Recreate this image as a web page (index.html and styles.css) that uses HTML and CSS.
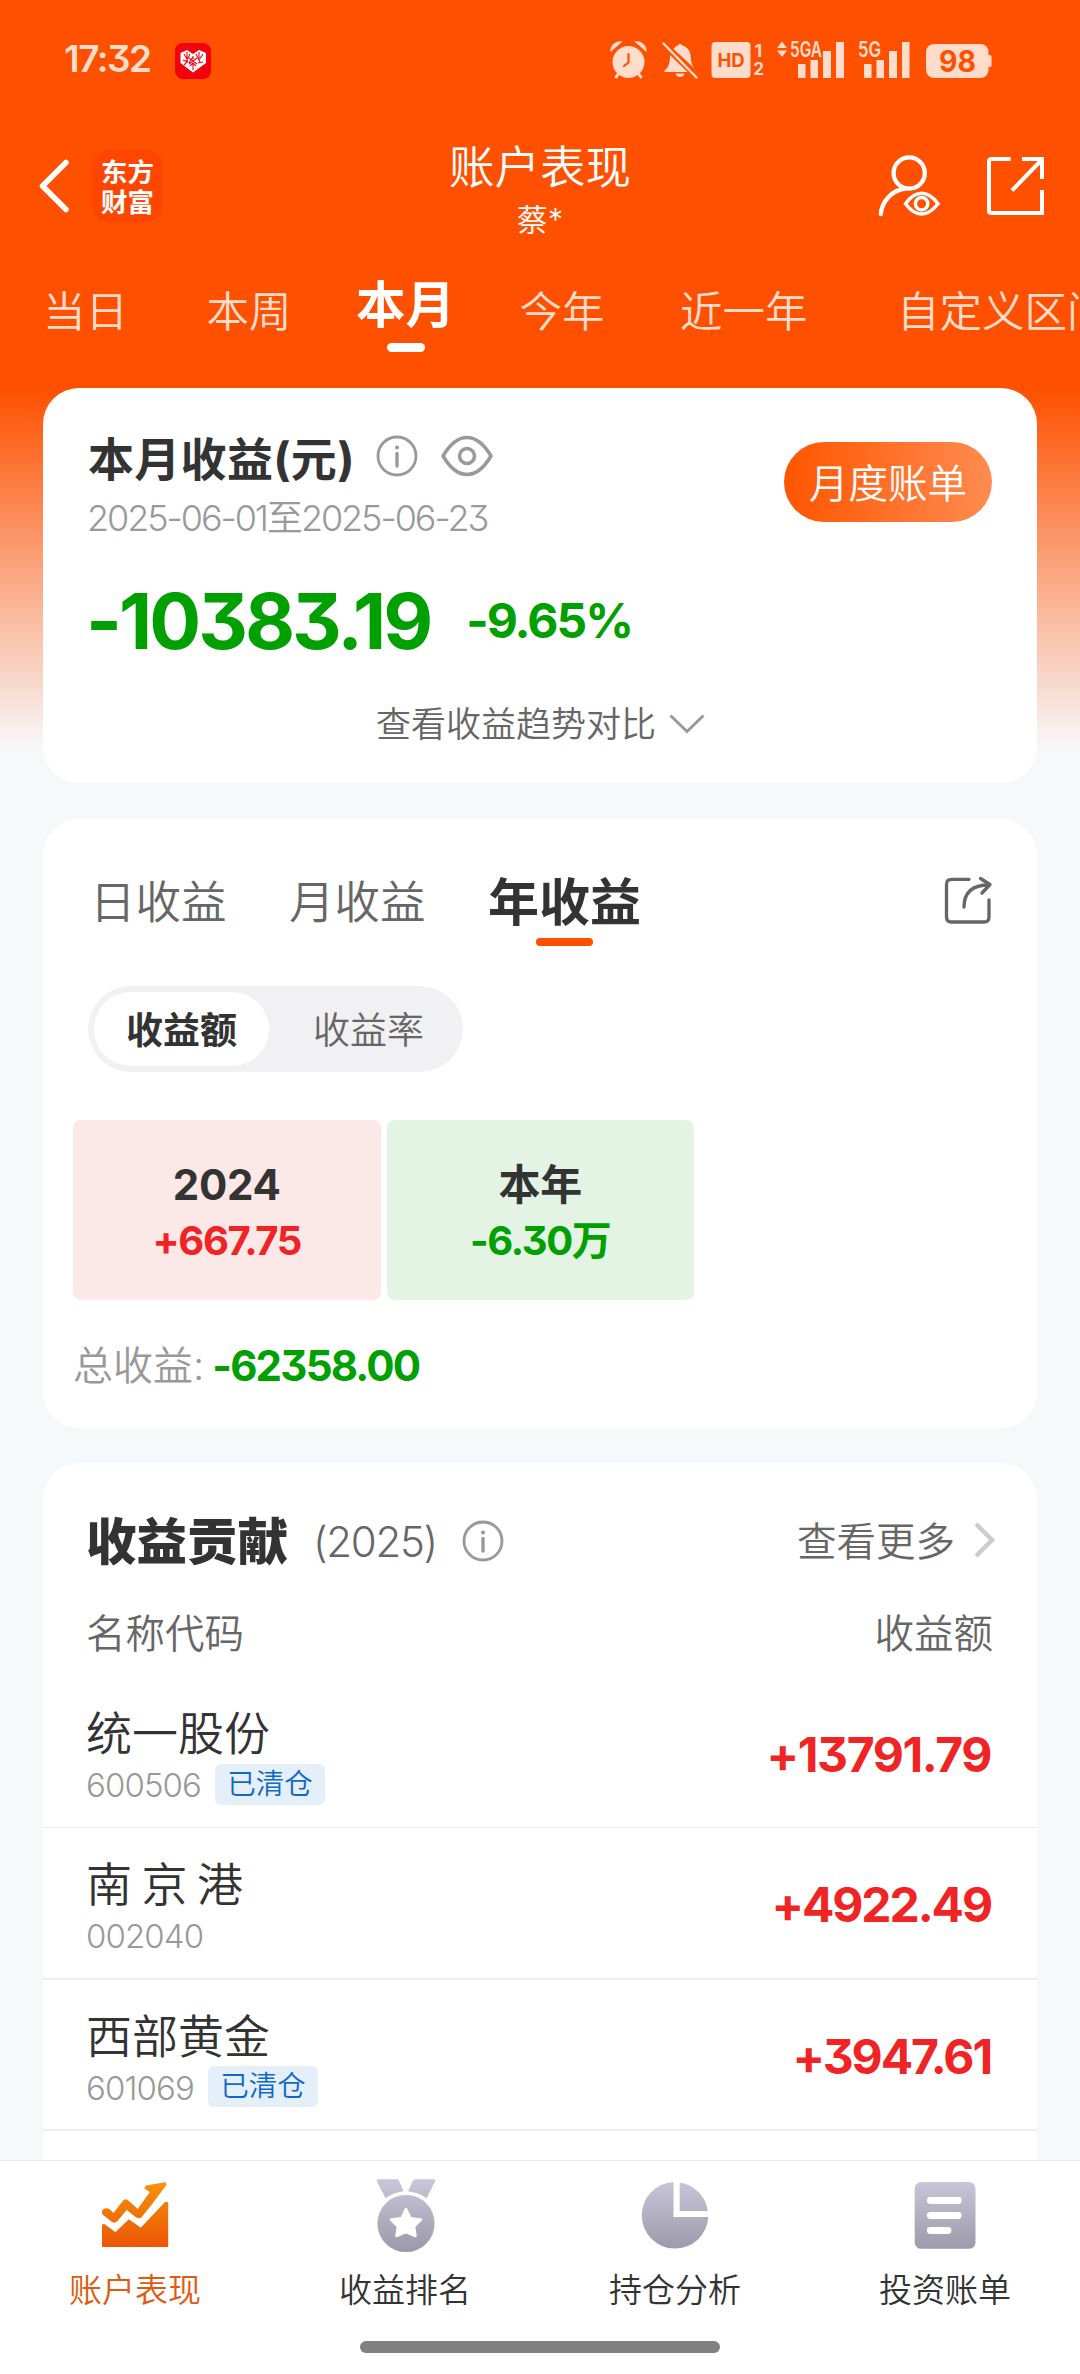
FILE: index.html
```html
<!DOCTYPE html>
<html lang="zh-CN">
<head>
<meta charset="utf-8">
<title>账户表现</title>
<link rel="stylesheet" href="styles.css">
</head>
<body>
<div class="status">
  <span class="clock">17:32</span>
  <svg class="app-badge" width="36" height="36" viewBox="0 0 36 36">
    <rect width="36" height="36" rx="8" fill="#f4000e"/>
    <path d="M5.500 10 L12 7 L18 11 L24 7 L31 10 V20 L18 29.500 L5.500 20Z" fill="#fff"/>
    <path d="M9 11l3 5M12 9v6M15 11l-4 8M8 17l5 2M9 22l4-4M18 14l-4 6M18 13v3M21 11l4 8M24 9v6M28 11l-4 6M28 19l-5 1M15 23l3-3 3 3M18 20v7M14 15l8 6M22 15l-8 6" stroke="#f4000e" stroke-width="1.100" fill="none"/>
  </svg>
  <div class="status-icons">
    <svg width="37" height="40" viewBox="610 40 37 40" fill="#ffdccc">
      <circle cx="628.500" cy="62" r="16"/>
      <path d="M610.500 52c-1-6 5-12 12-10.500ZM646.500 52c1-6-5-12-12-10.500Z"/>
      <path d="M619 73l-3.500 5M638 73l3.500 5" stroke="#ffdccc" stroke-width="3"/>
      <path d="M628.500 54v8.500l-4.500 3.500" fill="none" stroke="#ff5000" stroke-width="2.200" stroke-linecap="round"/>
    </svg>
    <svg class="bell" width="36" height="40" viewBox="662 40 36 40" fill="#ffdccc">
      <path d="M670 55l17.500 17H664.500v-1.500c4-3 5.500-7 5.500-15.500ZM673.500 49q2.500-3.500 5-4q1.500-2.500 3 0q8 2.500 9 10c.5 6 1 10 3.500 13ZM675.500 73.500h9q-1 3.500-4.500 3.500t-4.500-3.500Z"/>
      <path d="M663.500 43.500l33 34" stroke="#ffdccc" stroke-width="2.400" stroke-linecap="round"/>
    </svg>
    <svg width="53" height="40" viewBox="711 40 53 40" fill="#ffdccc">
      <rect x="711.500" y="42" width="39" height="36" rx="4"/>
      <text class="t-bold" x="731" y="66.500" font-size="18.500" text-anchor="middle" fill="#ff5000">HD</text>
      <text class="t-bold" x="758.500" y="57" font-size="17" text-anchor="middle">1</text>
      <text class="t-bold" x="758.500" y="75" font-size="17" text-anchor="middle">2</text>
    </svg>
    <svg width="68" height="40" viewBox="777 40 68 40" fill="#ffdccc">
      <path d="M777 48l5-6.500 5 6.500ZM777 50.500h10l-5 6.500Z"/>
      <text class="t-med" x="790" y="56.500" font-size="21" textLength="32" lengthAdjust="spacingAndGlyphs">5GA</text>
      <path d="M798 64h7.500v14H798ZM810.500 60h7.500v18h-7.500ZM823 51h8v27h-8ZM836 42h8v36h-8Z"/>
    </svg>
    <svg width="52" height="40" viewBox="858 40 52 40" fill="#ffdccc">
      <text class="t-med" x="858" y="56.500" font-size="21" textLength="23" lengthAdjust="spacingAndGlyphs">5G</text>
      <path d="M864 64h7.500v14H864ZM876.500 60h7.500v18h-7.500ZM889 51h8v27h-8ZM902 42h7.500v36H902Z"/>
    </svg>
    <svg class="battery" width="66" height="40" viewBox="926 40 66 40" fill="#ffdccc">
      <rect x="926" y="44" width="62.500" height="34" rx="8"/>
      <rect x="987" y="55" width="4.500" height="12" rx="1.500"/>
      <text class="t-bold" x="939" y="71.800" font-size="30" textLength="37" lengthAdjust="spacingAndGlyphs" fill="#ff5000">98</text>
    </svg>
  </div>
</div>

<header class="topbar">
  <div class="topbar-left">
    <svg width="30" height="54" viewBox="40 160 30 54"><path d="M66 163.500L42.500 187L66 210.500" fill="none" stroke="#fff" stroke-width="5.500" stroke-linecap="round" stroke-linejoin="round"/></svg>
    <div class="logo"><span>东方</span><span>财富</span></div>
  </div>
  <div class="topbar-title">
    <h1>账户表现</h1>
    <p>蔡*</p>
  </div>
  <div class="topbar-right">
    <svg width="64" height="64" viewBox="877 154 64 64" fill="none" stroke="#fff" stroke-width="4.300" stroke-linecap="round">
      <circle cx="909.200" cy="173" r="15.600"/>
      <path d="M880.800 214C882 201 892 190 906 188.500"/>
      <path d="M905.500 203.700Q913 193.300 921.600 193.300T938 203.700Q930 214 921.600 214T905.500 203.700Z" stroke-width="3.500"/>
      <circle cx="921.600" cy="203.700" r="6.200" stroke-width="3.400"/>
    </svg>
    <svg width="58" height="60" viewBox="986 156 58 60" fill="none" stroke="#fff" stroke-width="4">
      <path d="M1010.700 159H991.500q-2.500 0-2.500 2.500V210.500q0 2.500 2.500 2.500H1042V190"/>
      <path d="M1022 159H1042V179M1012 190.500L1041 160.500"/>
    </svg>
  </div>
</header>

<nav class="periods">
  <a>当日</a><a>本周</a><a class="active">本月</a><a>今年</a><a class="year-back">近一年</a><a class="custom">自定义区间</a>
</nav>

<main>
  <section class="card summary">
    <div class="summary-head">
      <div>
        <h2>本月收益(元)
          <svg width="42" height="42" viewBox="0 0 42 42" fill="none" stroke="#999" stroke-width="2.800"><circle cx="21" cy="21" r="19"/><path d="M21 18.500V31" stroke-width="3.400" stroke-linecap="round"/><circle cx="21" cy="12.500" r="2" fill="#999" stroke="none"/></svg>
          <svg class="eye" width="52" height="42" viewBox="0 0 52 42" fill="none" stroke="#999" stroke-width="3.500"><path d="M2 21Q13 2.500 26 2.500T50 21Q39 39.500 26 39.500T2 21Z" stroke-linejoin="round"/><circle cx="26" cy="21" r="7.500"/></svg>
        </h2>
        <p class="range">2025-06-01至2025-06-23</p>
      </div>
      <button class="bill">月度账单</button>
    </div>
    <div class="amount"><strong>-10383.19</strong><span>-9.65%</span></div>
    <div class="trend">查看收益趋势对比
      <svg width="36" height="22" viewBox="0 0 36 22" fill="none" stroke="#999" stroke-width="3"><path d="M1.500 2.500L18 18.500L34.500 2.500"/></svg>
    </div>
  </section>

  <section class="card calendar">
    <div class="cal-head">
      <div class="cal-tabs"><a>日收益</a><a>月收益</a><a class="active">年收益</a></div>
      <svg width="48" height="50" viewBox="945 876 48 50" fill="none" stroke="#666" stroke-width="3.300" stroke-linecap="round" stroke-linejoin="round">
        <path d="M970 879.300H952.500q-5 0-5 5V917q0 5 5 5H985q5 0 5-5V900"/>
        <path d="M965 907C965 892 974 885 990 885M981.500 878.500L991 884.500L983 893"/>
      </svg>
    </div>
    <div class="switch"><span class="on">收益额</span><span>收益率</span></div>
    <div class="years">
      <div class="year up"><b>2024</b><em>+667.75</em></div>
      <div class="year down"><b>本年</b><em>-6.30万</em></div>
    </div>
    <p class="total">总收益: <strong>-62358.00</strong></p>
  </section>

  <section class="card contrib">
    <div class="contrib-head">
      <h2>收益贡献</h2><span class="yr">(2025)</span>
      <svg width="42" height="42" viewBox="0 0 42 42" fill="none" stroke="#999" stroke-width="2.800"><circle cx="21" cy="21" r="19"/><path d="M21 18.500V31" stroke-width="3.400" stroke-linecap="round"/><circle cx="21" cy="12.500" r="2" fill="#999" stroke="none"/></svg>
      <a class="more">查看更多
        <svg width="22" height="36" viewBox="0 0 22 36" fill="none" stroke="#ccc" stroke-width="4.500"><path d="M2 2L18 18L2 34"/></svg>
      </a>
    </div>
    <div class="cols"><span>名称代码</span><span>收益额</span></div>
    <div class="row"><div><h3>统一股份</h3><p><span class="code">600506</span><i>已清仓</i></p></div><strong>+13791.79</strong></div>
    <div class="row"><div><h3 class="spaced">南京港</h3><p><span class="code">002040</span></p></div><strong>+4922.49</strong></div>
    <div class="row"><div><h3>西部黄金</h3><p><span class="code">601069</span><i>已清仓</i></p></div><strong>+3947.61</strong></div>
  </section>
</main>

<footer class="tabbar">
  <svg class="defs" width="0" height="0">
    <defs>
      <linearGradient id="hot" x1="0" y1="2182" x2="0" y2="2247" gradientUnits="userSpaceOnUse"><stop offset="0" stop-color="#f8920a"/><stop offset="1" stop-color="#eb5505"/></linearGradient>
      <linearGradient id="cool" x1="0" y1="2180" x2="0" y2="2250" gradientUnits="userSpaceOnUse"><stop offset="0" stop-color="#c8c6d8"/><stop offset="1" stop-color="#9c99aa"/></linearGradient>
    </defs>
  </svg>
  <div class="tabs">
    <a class="active">
      <svg width="68" height="76" viewBox="101.500 2178 68 76" fill="url(#hot)" stroke="url(#hot)" stroke-linejoin="round">
        <path stroke-width="2" d="M103.500 2225.500L104.500 2225L116 2233.500L129.500 2220.500L141.500 2229L166 2203L167.700 2203V2246H103.500Z"/>
        <path stroke-width="2" d="M103.500 2211Q106 2208 109.500 2210L114 2214.500L124 2201.500Q126 2199 128.500 2201.500L138.400 2210.500L151.500 2192L146 2188L147 2186.500L165.500 2183.300L166 2184.500L151.500 2204L141.500 2216.500Q139 2218 136.700 2216.300L127 2208.500L117 2220.500Q115 2222.500 113 2221L104.500 2214.500Q103 2213 103.500 2211Z"/>
      </svg>
      <span>账户表现</span>
    </a>
    <a>
      <svg width="68" height="76" viewBox="371.500 2178 68 76" fill="url(#cool)">
        <path d="M378.500 2179.300H397.500L399.500 2180.500L404 2191.300Q394 2192.500 386 2198.300L377.200 2181Q377 2179.500 378.500 2179.300ZM434.500 2179.300H415.500L413.500 2180.500L408.500 2191.300Q419 2192.500 427 2198.300L435.800 2181Q436 2179.500 434.500 2179.300Z"/>
        <circle cx="406.500" cy="2223.500" r="28.600"/>
        <path d="M406.500 2209L411 2218.300L421.500 2219.500L414.500 2226.500L416 2236L406.500 2232L397 2236L398.500 2226.500L391.500 2219.500L402 2218.300Z" fill="#fff" stroke="#fff" stroke-width="2.500" stroke-linejoin="round"/>
      </svg>
      <span>收益排名</span>
    </a>
    <a>
      <svg width="68" height="76" viewBox="641.500 2178 68 76" fill="url(#cool)">
        <path d="M674 2182A33.300 33.300 0 1 0 708.800 2217H674Z"/>
        <path d="M680.200 2182.600A33.300 33.300 0 0 1 708.300 2211H680.200Z"/>
      </svg>
      <span>持仓分析</span>
    </a>
    <a>
      <svg width="68" height="76" viewBox="911.500 2178 68 76" fill="url(#cool)">
        <rect x="915.200" y="2182" width="60.800" height="66.800" rx="6.500"/>
        <path d="M930.800 2200.500H958.800M930.800 2215.500H958.800M930.800 2230.500H948.500" stroke="#fff" stroke-width="6.800" stroke-linecap="round"/>
      </svg>
      <span>投资账单</span>
    </a>
  </div>
  <div class="home"></div>
</footer>
</body>
</html>
```
FILE: styles.css
```css
* { box-sizing: border-box; margin: 0; padding: 0; }
body {
  width: 1080px;
  height: 2374px;
  overflow: hidden;
  display: flex;
  flex-direction: column;
  font-family: "Inter", "Noto Sans CJK SC", sans-serif;
  font-weight: 350;
  font-feature-settings: "cv09";
  color: #333;
  background: linear-gradient(#ff5000 388px, #f7f8fa 750px);
}
svg { display: block; flex: none; overflow: visible; }
h1, h2, h3 { font-weight: 350; }
em, i { font-style: normal; }
a, span, strong, p, h1, h2, h3 { white-space: nowrap; }
.t-bold { font-weight: 700; }
.t-med { font-weight: 600; }

.status { height: 120px; padding: 0 88px 0 64px; display: flex; align-items: center; flex: none; }
.clock { width: 111px; font-size: 37px; font-weight: 600; line-height: 40px; letter-spacing: -1.500px; color: #ffdccc; margin-top: -2px; }
.app-badge { margin-top: 1px; }
.status-icons { margin-left: auto; display: flex; gap: 13px; }
.status-icons .bell { margin-left: 2px; }
.status-icons .battery { margin-left: 3px; }

.topbar { height: 132px; flex: none; display: grid; grid-template-columns: 1fr auto 1fr; align-items: center; padding: 0 36px; color: #fff; }
.topbar-left { display: flex; align-items: center; gap: 22px; padding-left: 4px; }
.logo { width: 71px; height: 72px; border-radius: 16px; background: #ff4600; display: flex; flex-direction: column; align-items: center; justify-content: center; font-size: 26.500px; font-weight: 700; line-height: 30px; padding-top: 2px; }
.topbar-title { text-align: center; padding-top: 15px; }
.topbar-title h1 { font-size: 45.500px; line-height: 52px; }
.topbar-title p { font-size: 31px; line-height: 52px; }
.topbar-right { display: flex; justify-content: flex-end; align-items: center; gap: 45px; }

.periods { height: 136px; flex: none; display: flex; gap: 78.500px; padding-left: 43px; overflow: hidden; font-size: 42.500px; line-height: 60px; color: #ffdccc; }
.periods a { padding-top: 30px; flex: none; }
.periods .active { padding-top: 23px; margin: 0 -14px; font-size: 49.500px; font-weight: 700; color: #fff; }
.periods .active::after { content: ""; display: block; width: 38px; height: 9px; margin: 8px auto 0; border-radius: 5px; background: #fff; }
.periods .year-back { margin-left: -3px; }
.periods .custom { margin-left: 11px; }

main { flex: 1; min-height: 0; overflow: hidden; padding: 0 43px; }
.card { background: #fff; border-radius: 36px; }

.summary { height: 395px; padding: 43px 45px 0; }
.summary-head { display: flex; justify-content: space-between; align-items: flex-start; }
.summary h2 { display: flex; align-items: center; font-size: 46px; font-weight: 700; line-height: 54px; height: 56px; letter-spacing: 0.300px; }
.summary h2 svg { margin: -6px 0 0 21.500px; }
.summary h2 .eye { margin-left: 23px; }
.range { margin: 9px 0 0 -1px; font-size: 36px; line-height: 44px; letter-spacing: -2.070px; color: #999; }
.bill { width: 208px; height: 80px; margin-top: 11px; padding-bottom: 3px; border: 0; border-radius: 40px; background: linear-gradient(90deg, #ff5500, #ff8b50); color: #fff; font: inherit; font-size: 39.500px; }
.amount { margin-top: 41px; display: flex; align-items: center; line-height: 80px; color: #00a000; }
.amount strong { margin-left: -2px; font-size: 77px; font-weight: 700; letter-spacing: -3px; }
.amount span { margin-left: 36px; font-size: 48px; font-weight: 650; letter-spacing: -1.900px; }
.trend { margin-top: 43px; display: flex; align-items: center; justify-content: center; gap: 13px; font-size: 35px; line-height: 40px; color: #666; padding-left: 1px; }

.calendar { height: 609px; margin-top: 36px; padding: 54px 45px 0; }
.cal-head { display: flex; justify-content: space-between; align-items: flex-start; }
.cal-tabs { display: flex; gap: 62.500px; padding-left: 2px; font-size: 45.500px; line-height: 60px; color: #666; }
.cal-tabs .active { font-size: 51px; font-weight: 700; color: #333; }
.cal-tabs .active::after { content: ""; display: block; width: 57px; height: 8px; margin: 5px auto 0; border-radius: 4px; background: #ff5000; }
.cal-head svg { margin-top: 3px; }
.switch { width: 375px; height: 86px; margin-top: 40px; padding: 6px; border-radius: 43px; background: #f1f1f4; display: flex; font-size: 37px; line-height: 77px; color: #666; text-align: center; }
.switch span { width: 175px; height: 74px; border-radius: 37px; }
.switch .on { background: #fff; color: #333; font-weight: 700; }
.switch span + span { margin-left: 12px; }
.years { display: flex; gap: 6px; margin: 48px 0 0 -15px; }
.year { width: 307.500px; height: 180px; border-radius: 8px; padding-top: 37px; text-align: center; }
.year b { display: block; font-size: 42px; font-weight: 650; line-height: 56px; letter-spacing: -0.300px; }
.year em { display: block; font-size: 40px; font-weight: 650; line-height: 55px; letter-spacing: -1.400px; }
.up { background: #fde8e8; }
.up em { color: #f02424; }
.down { background: #e3f4e5; }
.down em { color: #00a000; }
.total { margin: 41px 0 0 -15px; display: flex; gap: 8px; font-size: 40px; line-height: 50px; color: #999; }
.total strong { font-size: 42px; font-weight: 650; letter-spacing: -1.800px; color: #00a000; }

.contrib { height: 760px; margin-top: 35px; padding-top: 49px; }
.contrib-head { display: flex; align-items: center; padding: 0 41px 0 43px; line-height: 60px; color: #666; }
.contrib h2 { font-size: 50.500px; font-weight: 800; color: #333; }
.yr { margin: 0 25px 0 25px; font-size: 42px; letter-spacing: -1.300px; }
.contrib-head svg { margin-top: -3px; }
.more { margin-left: auto; display: flex; align-items: center; gap: 19px; font-size: 39.500px; margin-top: -1px; }
.cols { margin-top: 37px; display: flex; justify-content: space-between; padding: 0 44px 0 43px; font-size: 39.500px; line-height: 50px; color: #666; }
.row { height: 151px; border-bottom: 1px solid #ebebeb; padding: 0 46px 0 43px; display: flex; justify-content: space-between; }
.row + .row { height: 151.500px; border-bottom-width: 2px; border-color: #eee; }
.cols + .row { margin-top: 18px; }
.row h3 { margin-top: 30px; font-size: 46px; line-height: 52px; }
.row .spaced { letter-spacing: 9.500px; }
.row p { height: 44px; margin-top: 4px; display: flex; align-items: center; }
.code { font-size: 33px; line-height: 40px; letter-spacing: -0.900px; color: #999; }
.row i { width: 110px; height: 41px; margin: -2px 0 0 14px; border-radius: 6px; background: #e5effa; color: #1068c8; font-size: 28.500px; line-height: 39px; text-align: center; }
.row strong { margin-top: 48px; font-size: 48px; font-weight: 700; line-height: 60px; letter-spacing: -1.400px; color: #f02424; }
.row + .row strong { margin-top: 47px; letter-spacing: -2.100px; }

.tabbar { height: 214px; flex: none; background: #fff; border-top: 1px solid #e8eaeb; }
.defs { position: absolute; }
.tabs { display: grid; grid-template-columns: repeat(4, 1fr); height: 180px; padding-top: 17px; }
.tabs a { display: flex; flex-direction: column; align-items: center; font-size: 33px; }
.tabs span { margin-top: 16px; line-height: 40px; }
.tabs .active { color: #e05a10; }
.home { width: 360px; height: 12px; margin: 0 auto; border-radius: 6px; background: #808080; }
```
